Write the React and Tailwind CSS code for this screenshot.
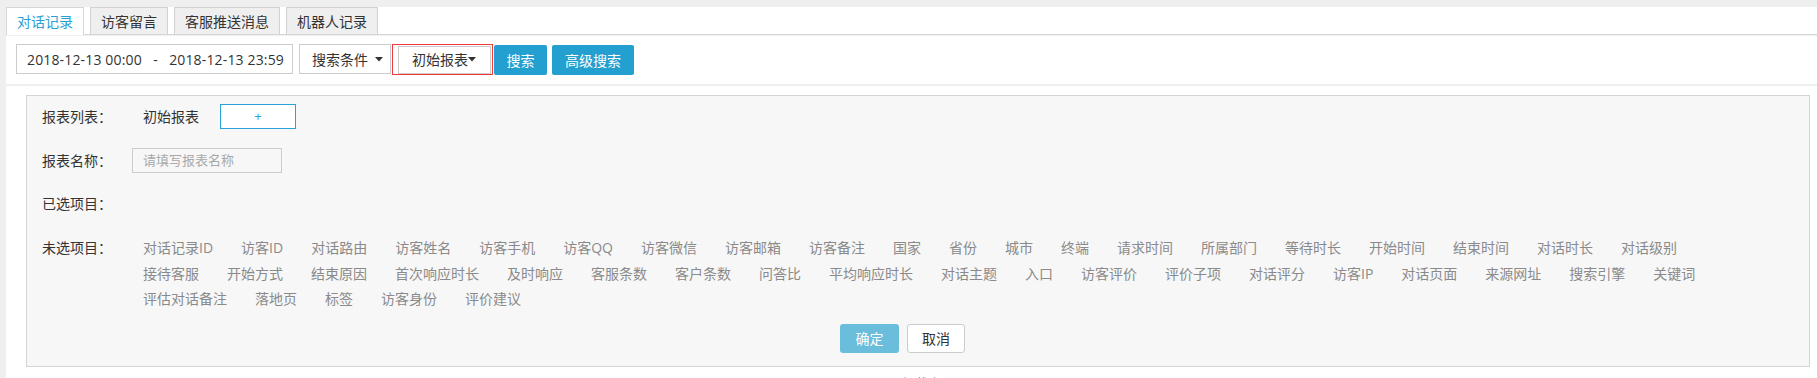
const row1 = ["对话记录ID","访客ID","对话路由","访客姓名","访客手机","访客QQ","访客微信","访客邮箱","访客备注","国家","省份","城市","终端","请求时间","所属部门","等待时长","开始时间","结束时间","对话时长","对话级别"];
const row2 = ["接待客服","开始方式","结束原因","首次响应时长","及时响应","客服条数","客户条数","问答比","平均响应时长","对话主题","入口","访客评价","评价子项","对话评分","访客IP","对话页面","来源网址","搜索引擎","关键词"];
const row3 = ["评估对话备注","落地页","标签","访客身份","评价建议"];

function Caret() {
  return (
    <svg width="8" height="5" viewBox="0 0 8 5" className="inline-block">
      <path d="M0 0 L8 0 L4 4.5 Z" fill="#333" />
    </svg>
  );
}

function ItemRow({ items }) {
  return (
    <div className="flex h-[25.5px] items-center gap-x-[28px] whitespace-nowrap text-[#8a8a8a]">
      {items.map((t) => (
        <span key={t}>{t}</span>
      ))}
    </div>
  );
}

export default function App() {
  return (
    <div className="min-h-[378px] bg-[#efefef] pt-[7px] pl-[6px] font-['Open_Sans','Noto_Sans_CJK_SC',sans-serif] text-[14px] text-[#333]">
      <div className="bg-white pb-[20px]">
        {/* Tabs */}
        <div className="flex h-[28px] gap-[6px] border-b border-[#d6d6d6]">
          <div className="-mb-px flex h-[28px] items-center border border-b-0 border-[#d6d6d6] bg-white px-[10px] text-[#2a9fd6]">
            对话记录
          </div>
          <div className="flex h-[27px] items-center border border-b-0 border-[#d2d2d2] bg-[#efefef] px-[10px]">
            访客留言
          </div>
          <div className="flex h-[27px] items-center border border-b-0 border-[#d2d2d2] bg-[#efefef] px-[10px]">
            客服推送消息
          </div>
          <div className="flex h-[27px] items-center border border-b-0 border-[#d2d2d2] bg-[#efefef] px-[10px]">
            机器人记录
          </div>
        </div>
        <div className="h-[1px] bg-[#f1f1f1]" />

        {/* Toolbar */}
        <div className="flex h-[48px] items-start pt-[8px] pl-[10px]">
          <div className="flex h-[30px] w-[277px] items-center border border-[#cccccc] bg-white px-[10px] whitespace-nowrap tracking-[0.15px]">
            2018-12-13 00:00&nbsp;&nbsp;&nbsp;-&nbsp;&nbsp;&nbsp;2018-12-13 23:59
          </div>
          <div className="ml-[6px] flex h-[30px] w-[92px] items-center gap-[7px] border border-[#cccccc] bg-white pl-[12px]">
            <span>搜索条件</span>
            <Caret />
          </div>
          <div className="ml-[1px] flex h-[31px] w-[101px] items-center border border-[#ee3a3a] pl-[5px]">
            <div className="flex h-[28px] w-[93px] items-center border border-[#cccccc] bg-white pl-[13px]">
              <span>初始报表</span>
              <Caret />
            </div>
          </div>
          <div className="ml-[1px] mt-[1px] flex h-[30px] w-[53px] items-center justify-center rounded-[2px] bg-[#23a0d0] text-white">
            搜索
          </div>
          <div className="ml-[5px] mt-[1px] flex h-[30px] w-[82px] items-center justify-center rounded-[2px] bg-[#23a0d0] text-white">
            高级搜索
          </div>
        </div>
        <div className="h-[3px] bg-gradient-to-b from-[#e8e8e8] to-white" />

        {/* Panel */}
        <div className="mt-[8px] ml-[20px] mr-[7px] border border-[#d5d5d5] bg-[#f7f7f7] pt-[8px] pb-[13px] pl-[15px]">
          <div className="flex h-[25px] items-center">
            <span className="w-[90px]">报表列表：</span>
            <span className="ml-[11px]">初始报表</span>
            <div className="ml-[21px] flex h-[25px] w-[76px] items-center justify-center border border-[#27a3dc] bg-white text-[13px] text-[#27a3dc]">
              +
            </div>
          </div>
          <div className="mt-[19px] flex h-[25px] items-center">
            <span className="w-[90px]">报表名称：</span>
            <div className="flex h-[25px] w-[150px] items-center border border-[#cccccc] bg-[#f7f7f7] px-[10px] text-[13px] text-[#a9a9a9]">
              请填写报表名称
            </div>
          </div>
          <div className="mt-[18px] flex h-[25px] items-center">
            <span className="w-[90px]">已选项目：</span>
          </div>
          <div className="mt-[19px] flex items-start">
            <span className="flex h-[25.5px] w-[90px] items-center">未选项目：</span>
            <div className="ml-[11px] flex flex-col">
              <ItemRow items={row1} />
              <ItemRow items={row2} />
              <ItemRow items={row3} />
            </div>
          </div>
          <div className="mt-[12px] flex justify-center gap-[8px] pr-[46px]">
            <div className="flex h-[29px] w-[59px] items-center justify-center rounded-[3px] bg-[#6bbddc] text-white">
              确定
            </div>
            <div className="flex h-[29px] w-[58px] items-center justify-center rounded-[3px] border border-[#cccccc] bg-white">
              取消
            </div>
          </div>
        </div>

        <div className="mt-[7px] flex justify-center pl-[10px] text-[13px] leading-[18px] text-[#2a9fd6]">
          <span className="text-[#999]">…</span>
          <span>加载中</span>
        </div>
      </div>
    </div>
  );
}
